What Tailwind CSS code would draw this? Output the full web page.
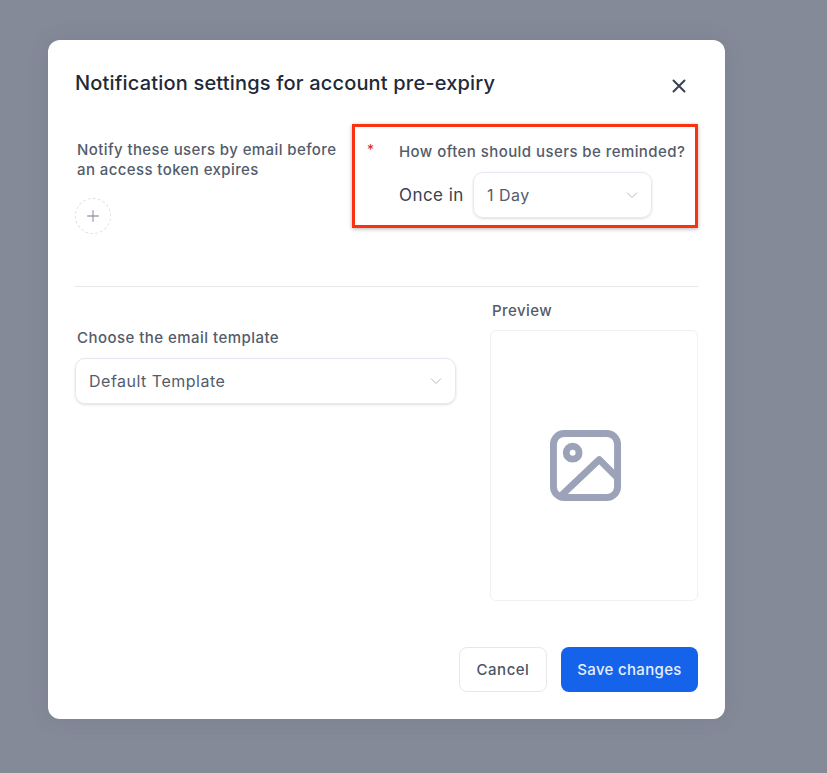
<!DOCTYPE html>
<html lang="en">
<head>
    <meta charset="UTF-8">
    <meta name="viewport" content="width=device-width, initial-scale=1.0">
    <title>Notification settings</title>
    <script src="https://cdn.jsdelivr.net/npm/@tailwindcss/browser@4"></script>
</head>
<body class="bg-[#858a99] h-[773px] overflow-hidden font-['Inter',sans-serif]">
    <div class="ml-[48px] pt-[40px]">
        <div class="w-[677px] h-[679px] bg-white rounded-xl px-[27px] flex flex-col shadow-[0_0_20px_rgba(70,75,85,0.15)]">
            <!-- header -->
            <div class="flex justify-between pt-[30px] h-[85px]">
                <h1 class="text-[20px] leading-[26px] font-medium tracking-[0.18px] text-[#1f2937]">Notification settings for account pre-expiry</h1>
                <button class="mt-[8px] mr-[11px] w-[16px] h-[16px] text-[#374151]">
                    <svg viewBox="0 0 16 16" class="w-4 h-4" fill="none" stroke="currentColor" stroke-width="2" stroke-linecap="round"><path d="M2.5 2.5l11 11M13.5 2.5l-11 11"/></svg>
                </button>
            </div>

            <!-- reminder row -->
            <div class="flex h-[162px] border-b border-[#e5e7eb]">
                <div class="w-[277px] pl-[2px]">
                    <p class="w-[265px] pt-[15px] text-[15px] leading-[20px] font-medium tracking-[0.4px] text-[#545c6b]">Notify these users by email before an access token expires</p>
                    <button class="mt-[18px] ml-[-2px] w-9 h-9 rounded-full border border-dashed border-[#dfe2e6] flex items-center justify-center text-[#9ca3af]">
                        <svg viewBox="0 0 12 12" class="w-[12px] h-[12px]" fill="none" stroke="currentColor" stroke-width="1.3" stroke-linecap="round"><path d="M6 .7v10.6M.7 6h10.6"/></svg>
                    </button>
                </div>
                <div class="mt-[-1px] w-[346px] h-[104px] border-[3px] border-[#fa3210] shadow-[0_1px_4px_rgba(0,0,0,0.3)] flex pl-[12px] pt-[13px]">
                    <span class="w-[32px] text-[14px] leading-[20px] text-[#dc2626]">*</span>
                    <div>
                        <p class="pt-[2px] text-[15px] leading-[20px] font-medium tracking-[0.43px] text-[#545c6b]">How often should users be reminded?</p>
                        <div class="flex items-center mt-[10px]">
                            <span class="pt-[1px] text-[17px] tracking-[0.45px] text-[#374151] w-[74px]">Once in</span>
                            <div class="w-[179px] h-[46px] rounded-[10px] border border-[#e6e8ef] shadow-sm flex items-center justify-between px-[13px] text-[16px] tracking-[0.5px] text-[#545c6b]">
                                <span>1 Day</span>
                                <svg viewBox="0 0 12 8" class="w-[12px] h-[8px]" fill="none" stroke="#b4b9c3" stroke-width="1"><path d="M1 1.5l5 5 5-5"/></svg>
                            </div>
                        </div>
                    </div>
                </div>
            </div>

            <!-- template row -->
            <div class="flex justify-between flex-1">
                <div class="w-[381px] pt-[41px]">
                    <label class="block pl-[2px] text-[15px] leading-[20px] font-medium tracking-[0.46px] text-[#545c6b]">Choose the email template</label>
                    <div class="mt-[10px] h-[46px] rounded-[10px] border border-[#e6e8ef] shadow-sm flex items-center justify-between px-[13px] text-[16px] tracking-[0.5px] text-[#545c6b]">
                        <span>Default Template</span>
                        <svg viewBox="0 0 12 8" class="w-[12px] h-[8px]" fill="none" stroke="#b4b9c3" stroke-width="1"><path d="M1 1.5l5 5 5-5"/></svg>
                    </div>
                </div>
                <div class="w-[208px] pt-[14px]">
                    <label class="block pl-[2px] text-[15px] leading-[20px] font-medium tracking-[0.43px] text-[#545c6b]">Preview</label>
                    <div class="mt-[9px] h-[271px] rounded-md border border-[#f0f1f3] flex items-center justify-center pr-[18px]">
                        <svg viewBox="0 0 72 72" class="w-[71px] h-[71px]" fill="none" stroke="#9ca3b8" stroke-width="7" stroke-linecap="round" stroke-linejoin="round">
                            <rect x="3.5" y="3.5" width="65" height="65" rx="11"/>
                            <circle cx="23" cy="23" r="6.5"/>
                            <path d="M12 66l38-36 18 18"/>
                        </svg>
                    </div>
                </div>
            </div>

            <!-- footer -->
            <div class="flex justify-end gap-[14px] pb-[27px]">
                <button class="w-[88px] h-[45px] pt-[1px] rounded-lg border border-[#e5e7eb] bg-white text-[15px] font-medium tracking-[0.5px] text-[#4b5563]">Cancel</button>
                <button class="w-[137px] h-[45px] pt-[1px] rounded-lg bg-[#1463ea] text-[15px] font-medium tracking-[0.33px] text-white/90">Save changes</button>
            </div>
        </div>
    </div>
</body>
</html>
